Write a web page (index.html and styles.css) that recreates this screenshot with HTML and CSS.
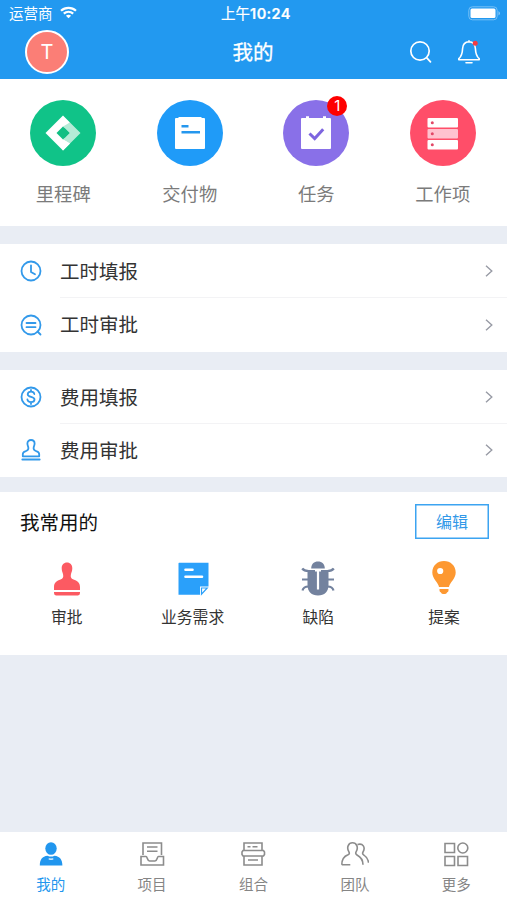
FILE: index.html
```html
<!DOCTYPE html>
<html lang="zh-CN">
<head>
<meta charset="utf-8">
<title>我的</title>
<link rel="stylesheet" href="styles.css">
</head>
<body>
<div class="app">
  <header class="header">
    <div class="status">
      <div class="carrier">运营商
        <svg width="17" height="13" viewBox="0 0 17 13" fill="none" stroke="#fff" stroke-width="2.2"><path d="M1 4.7C5.2.8 11.8.8 16 4.7M3.8 7.6c2.7-2.4 6.7-2.4 9.4 0"/><path d="M8.500 12.300 5.900 9.700c1.500-1.300 3.700-1.300 5.200 0z" fill="#fff" stroke="none"/></svg>
      </div>
      <div class="time">上午<b>10:24</b></div>
      <svg class="battery" width="33" height="15" viewBox="0 0 33 15"><rect x=".8" y=".8" width="28.400" height="13" rx="3.500" fill="none" stroke="#75bff6" stroke-width="1"/><rect x="2.500" y="2.500" width="25" height="9.600" rx="1.500" fill="#fff"/><path d="M30.500 5v4.600q3-2.300 0-4.600z" fill="#8dcaf8"/></svg>
    </div>
    <div class="nav">
      <div class="avatar">T</div>
      <h1 class="title">我的</h1>
      <div class="actions">
        <svg width="24" height="24" viewBox="0 0 24 24" fill="none" stroke="#fff" stroke-width="1.700" stroke-linecap="round"><circle cx="11" cy="11" r="9.200"/><path d="m17.800 17.800 3.700 4"/></svg>
        <svg width="24" height="26" viewBox="0 0 24 26" fill="none" stroke="#fff" stroke-width="1.600" stroke-linecap="round" stroke-linejoin="round"><path d="M12 1.800v1C8.200 3 5.800 5.500 5.600 9.500c-.2 4.500-.6 7.500-3.800 10.200v1h20.400v-1C19 17 18.600 14 18.400 9.500 18.200 5.500 15.800 3 12 2.800M9 23.700h6"/><circle cx="18.200" cy="4.200" r="2.500" fill="#f23c43" stroke="none"/></svg>
      </div>
    </div>
  </header>

  <section class="modules">
    <a class="module"><span class="disc green"><svg width="36" height="36" viewBox="0 0 36 36"><path d="M18 .5.500 18 18 35.500l7-7L14.500 18 25 7.500z" fill="#fff"/><path d="M25 7.500 35.500 18 25 28.500 18 24.500 24.500 18 18 11.500z" fill="#b5ebd7"/><path d="m18 24.500 7 4-7 7-5-11z" fill="#fff"/><path d="m18 11.500 6.500 6.500-6.500 6.500-6.500-6.500z" fill="#10bf83"/></svg></span><span class="caption">里程碑</span></a>
    <a class="module"><span class="disc blue"><svg width="32" height="36" viewBox="0 0 32 36"><path d="M2 3h2l1-1h22l1 1h2q1 0 1 1v29q0 1-1 1H2q-1 0-1-1V4q0-1 1-1z" fill="#fff"/><path d="M7.500 11.300h7M7.500 17.300H26" stroke="#2597ee" stroke-width="2.400"/></svg></span><span class="caption">交付物</span></a>
    <a class="module"><span class="disc purple"><svg width="32" height="36" viewBox="0 0 32 36"><path d="M2 3h4V1.300h3V3h14V1.300h3V3h4q1 0 1 1v29q0 1-1 1H2q-1 0-1-1V4q0-1 1-1z" fill="#fff"/><path d="m9.500 18.500 5.200 5 8.500-9.200" fill="none" stroke="#7d65df" stroke-width="3"/></svg><i class="badge">1</i></span><span class="caption">任务</span></a>
    <a class="module"><span class="disc red"><svg width="32" height="36" viewBox="0 0 32 36"><g fill="#fff"><rect x=".5" y="3" width="30.500" height="9.500" rx="1"/><rect x=".5" y="14" width="30.500" height="9.500" rx="1" fill="#ffc2cf"/><rect x=".5" y="25" width="30.500" height="9.500" rx="1"/></g><g fill="#e24766"><circle cx="5.300" cy="7.800" r="1.500"/><circle cx="5.300" cy="18.700" r="1.500"/><circle cx="5.300" cy="29.800" r="1.500"/></g></svg></span><span class="caption">工作项</span></a>
  </section>

  <section class="list first">
    <a class="row"><svg class="lead" width="22" height="22" viewBox="0 0 22 22"><circle cx="11" cy="11" r="9.500"/><path d="M11 5.300V12l4 2.300"/></svg><span class="label">工时填报</span><svg class="chevron" width="8" height="12" viewBox="0 0 8 12"><path d="m1 .7 5.800 5.300L1 11.300"/></svg></a>
    <a class="row"><svg class="lead" width="22" height="22" viewBox="0 0 22 22"><circle cx="11" cy="11" r="9.500"/><path d="M6.500 9h9M6.500 13.200h9M17.500 17.500l3 3"/></svg><span class="label">工时审批</span><svg class="chevron" width="8" height="12" viewBox="0 0 8 12"><path d="m1 .7 5.800 5.300L1 11.300"/></svg></a>
  </section>

  <section class="list second">
    <a class="row"><svg class="lead" width="22" height="22" viewBox="0 0 22 22"><circle cx="11" cy="11" r="9.500"/><path d="M14.300 8c-.2-1.500-1.500-2.300-3.300-2.300S7.700 6.600 7.700 8.200c0 3.500 6.800 1.900 6.800 5.300 0 1.700-1.500 2.600-3.500 2.600s-3.400-.9-3.600-2.600M11 4v1.700M11 16.100V18"/></svg><span class="label">费用填报</span><svg class="chevron" width="8" height="12" viewBox="0 0 8 12"><path d="m1 .7 5.800 5.300L1 11.300"/></svg></a>
    <a class="row"><svg class="lead" width="22" height="22" viewBox="0 0 22 22"><path d="M2.800 17.300v-2c0-1.600 1-2.600 2.500-3 2.700-.7 3.500-1.800 3-4C8 7 7.400 6 7.400 4.600 7.400 2.500 9 1 11 1s3.600 1.500 3.600 3.600c0 1.400-.6 2.400-.9 3.700-.5 2.200.3 3.300 3 4 1.500.4 2.500 1.400 2.500 3v2zM2.300 20.500h17.400"/></svg><span class="label">费用审批</span><svg class="chevron" width="8" height="12" viewBox="0 0 8 12"><path d="m1 .7 5.800 5.300L1 11.300"/></svg></a>
  </section>

  <section class="favorites">
    <div class="fav-head"><h2>我常用的</h2><button class="edit">编辑</button></div>
    <div class="fav-grid">
      <a class="fav"><svg width="34" height="36" viewBox="0 0 34 36" fill="#fc5a62"><path d="M4 29v-3c0-4.500 3-6.500 6.500-7.500 2.600-.8 3.100-2.700 2.600-5C12.700 11.500 11.700 10 11.700 7.200c0-3.400 2.100-5.700 5.300-5.700s5.300 2.300 5.300 5.700c0 2.800-1 4.300-1.400 6.300-.5 2.300 0 4.200 2.600 5C27 19.500 30 21.500 30 26v3zM4 31h26v1q0 2.400-2 2.400H6Q4 34.400 4 32z"/></svg>审批</a>
      <a class="fav"><svg width="34" height="36" viewBox="0 0 34 36"><path d="M3 1.700h29.500v23.800H24v8.200H2.500V2.200z" fill="#2aa0fa"/><path d="M25.500 27h5.700l-5.700 6.200z" fill="#fff" stroke="#2aa0fa" stroke-width="1.200"/><path d="M9.500 8.700h7M9.500 15.700H26" stroke="#fff" stroke-width="2.600" stroke-linecap="round"/></svg>业务需求</a>
      <a class="fav"><svg width="34" height="36" viewBox="0 0 34 36" fill="#73829e"><path d="M10.200 7.500C10.300 3 13 .6 17 .6s6.700 2.400 6.800 6.900z"/><path d="M6.500 9h21v15c0 6.500-4 10.500-10.500 10.500S6.500 30.500 6.500 24z"/><path d="M1.200 7.500q1.800 2.500 6.500 2.500M1 18.500h6M1.500 29.500q1-4 6-4M32.800 7.500Q31 10 26.300 10M33 18.500h-6M32.500 29.500q-1-4-6-4" fill="none" stroke="#73829e" stroke-width="2.200"/><path d="M17 9v19.500M14 9.500h6" stroke="#fff" stroke-width="2.200" fill="none"/></svg>缺陷</a>
      <a class="fav"><svg width="34" height="36" viewBox="0 0 34 36"><path d="M12 26c-.7-4.500-6.700-8.200-6.700-14.500C5.300 4.500 10.500 0 17 0s11.700 4.500 11.700 11.500C28.700 17.800 22.700 21.500 22 26zM12.500 28h9v1.500q0 1.500-1.500 2c-.5 2-5.500 2-6 0q-1.500-.5-1.500-2z" fill="#fd9831"/><circle cx="13.200" cy="10" r="3.100" fill="#fff"/></svg>提案</a>
    </div>
  </section>

  <nav class="tabs">
    <a class="tab active"><svg width="28" height="26" viewBox="0 0 28 26" fill="#2196ee"><ellipse cx="14" cy="7.500" rx="5.700" ry="6.300"/><path d="M2.800 24.500c0-6 2.500-9.300 7.700-9.800q3.500 1.800 7 0c5.200.5 7.900 3.800 7.900 9.800z"/><path d="M11.700 17.700q2.300 1 4.600 0" fill="none" stroke="#fff" stroke-width="1.200"/></svg>我的</a>
    <a class="tab"><svg width="28" height="26" viewBox="0 0 28 26"><path d="M5 14V2h18.500v12M9 6h10.500M9 10.200h10.500M3 24V15.500h5c1.500 0 1 4.500 3.500 4.500H17c2.500 0 2-4.500 3.500-4.500h5V24z"/></svg>项目</a>
    <a class="tab"><svg width="28" height="26" viewBox="0 0 28 26"><path d="M5 9.500V2h18v7.500M5 15v9h18v-9M4 9.500h20.500l1 1.500v2.500l-1 1.500H4l-1-1.500V11zM8.500 5.800h3M13.500 5.800h5M9 19h10"/></svg>组合</a>
    <a class="tab"><svg width="28" height="26" viewBox="0 0 28 26"><path d="M.8 23.800c0-5.300 2.200-8.500 6.200-10 1.700-.7 1.500-2 .8-3.200-2.500-4.300-.3-8.800 3.700-8.800s6.200 4.500 3.700 8.800c-.7 1.200-.7 2.600.8 3.400 3.500 1.800 6 4.500 6 9.800M.8 23.800h8.500M16.500 3.500c5.500-1.800 8.200 3 5.500 7.500-.7 1.200-.6 2 .6 2.800 3 2 4.700 3.800 4.900 8"/></svg>团队</a>
    <a class="tab"><svg width="28" height="26" viewBox="0 0 28 26"><path d="M3 2.500h9.500v9H3zM3 15.500h9.500v9H3zM16 15.500h9.500v9H16z"/><circle cx="20.800" cy="7" r="5"/></svg>更多</a>
  </nav>
</div>
</body>
</html>
```
FILE: styles.css
```css
* { box-sizing: border-box; }
body {
  margin: 0;
  font-family: "Noto Sans CJK SC", sans-serif;
  background: #e9edf4;
}
svg { display: block; flex: none; }
h1, h2 { margin: 0; font-weight: 400; }

.app {
  width: 507px;
  height: 900px;
  display: flex;
  flex-direction: column;
  overflow: hidden;
}

.header { height: 79px; background: #2299f0; color: #fff; }
.status {
  height: 26px;
  padding: 0 6px 0 9px;
  display: grid;
  grid-template-columns: 1fr auto 1fr;
  align-items: center;
  font-size: 14.500px;
  line-height: 25px;
}
.carrier { display: flex; align-items: center; gap: 7px; padding-bottom: 1px; }
.time { padding-left: 2px; -webkit-text-stroke: .2px #fff; }
.time b { font-family: Inter, sans-serif; font-weight: 600; font-size: 14.500px; letter-spacing: .4px; }
.battery { justify-self: end; }
.nav {
  height: 52px;
  padding: 0 26px 0 25px;
  display: grid;
  grid-template-columns: 1fr auto 1fr;
  align-items: center;
}
.avatar {
  width: 44px;
  height: 44px;
  border: 2px solid #fff;
  border-radius: 50%;
  background: #fb7e76;
  font: 20px/41px Inter, sans-serif;
  text-align: center;
}
.title { padding-bottom: 1px; font-size: 20.500px; line-height: 49px; -webkit-text-stroke: .3px #fff; }
.actions { display: flex; justify-content: flex-end; align-items: center; gap: 24px; }

.modules {
  height: 147px;
  padding: 21px 1px 0 0;
  display: grid;
  grid-template-columns: repeat(4, 1fr);
  background: #fff;
}
.module {
  display: flex;
  flex-direction: column;
  align-items: center;
  gap: 13px;
  font-size: 18.300px;
  line-height: 28px;
  color: #7b7b7b;
}
.disc {
  position: relative;
  width: 66px;
  height: 66px;
  border-radius: 50%;
  display: flex;
  align-items: center;
  justify-content: center;
}
.green { background: #10c388; }
.blue { background: #1f9bf8; }
.purple { background: #8970e8; }
.red { background: #ff4e69; }
.badge {
  position: absolute;
  top: -4px;
  right: 2px;
  width: 20px;
  height: 20px;
  border-radius: 50%;
  background: #fe0000;
  color: #fff;
  font: 15px/20px Inter, sans-serif;
  text-align: center;
}

.list { background: #fff; }
.first { margin-top: 18px; height: 108px; }
.second { margin-top: 18px; height: 107px; }
.row {
  height: 53px;
  padding: 0 14px 0 20px;
  display: flex;
  align-items: center;
}
.row .lead { margin-left: -.5px; fill: none; stroke: #3299ea; stroke-width: 1.800; stroke-linecap: round; stroke-linejoin: round; }
.label {
  flex: 1;
  margin-left: 18.500px;
  font-size: 19.500px;
  line-height: 52px;
  color: #333;
}
.row + .row { height: 55px; padding-right: 0; }
.second .row + .row { height: 54px; }
.row + .row .label { align-self: flex-start; border-top: 1px solid #f3f3f5; }
.row + .row .chevron { margin-left: -22px; margin-right: 14px; }
.chevron { fill: none; stroke: #989ba5; stroke-width: 1.400; }

.favorites { margin-top: 15px; height: 163px; background: #fff; }
.fav-head {
  height: 59px;
  padding: 0 18px 0 20px;
  display: flex;
  align-items: center;
  justify-content: space-between;
}
.fav-head h2 { font-size: 19.500px; line-height: 59px; color: #111; }
.edit {
  width: 74px;
  height: 35px;
  padding: 0;
  border: 1px solid #3ca4f1;
  box-shadow: inset 0 0 0 .5px #3ca4f1;
  background: #fff;
  color: #3299e8;
  font: 16px/31px "Noto Sans CJK SC", sans-serif;
}
.fav-grid {
  padding: 10px 0 0 4px;
  display: grid;
  grid-template-columns: repeat(4, 1fr);
}
.fav {
  display: flex;
  flex-direction: column;
  align-items: center;
  gap: 8px;
  font-size: 15.800px;
  line-height: 24px;
  color: #333;
}

.tabs {
  margin-top: auto;
  height: 68px;
  padding-top: 9px;
  display: grid;
  grid-template-columns: repeat(5, 1fr);
  background: #fff;
}
.tab {
  display: flex;
  flex-direction: column;
  align-items: center;
  gap: 6px;
  font-size: 14.500px;
  line-height: 22px;
  color: #858585;
}
.tab svg { stroke: #8c8c8c; stroke-width: 1.600; fill: none; }
.tab.active svg { fill: #2196ee; stroke: none; }
.tab.active { color: #2196ee; }
```
